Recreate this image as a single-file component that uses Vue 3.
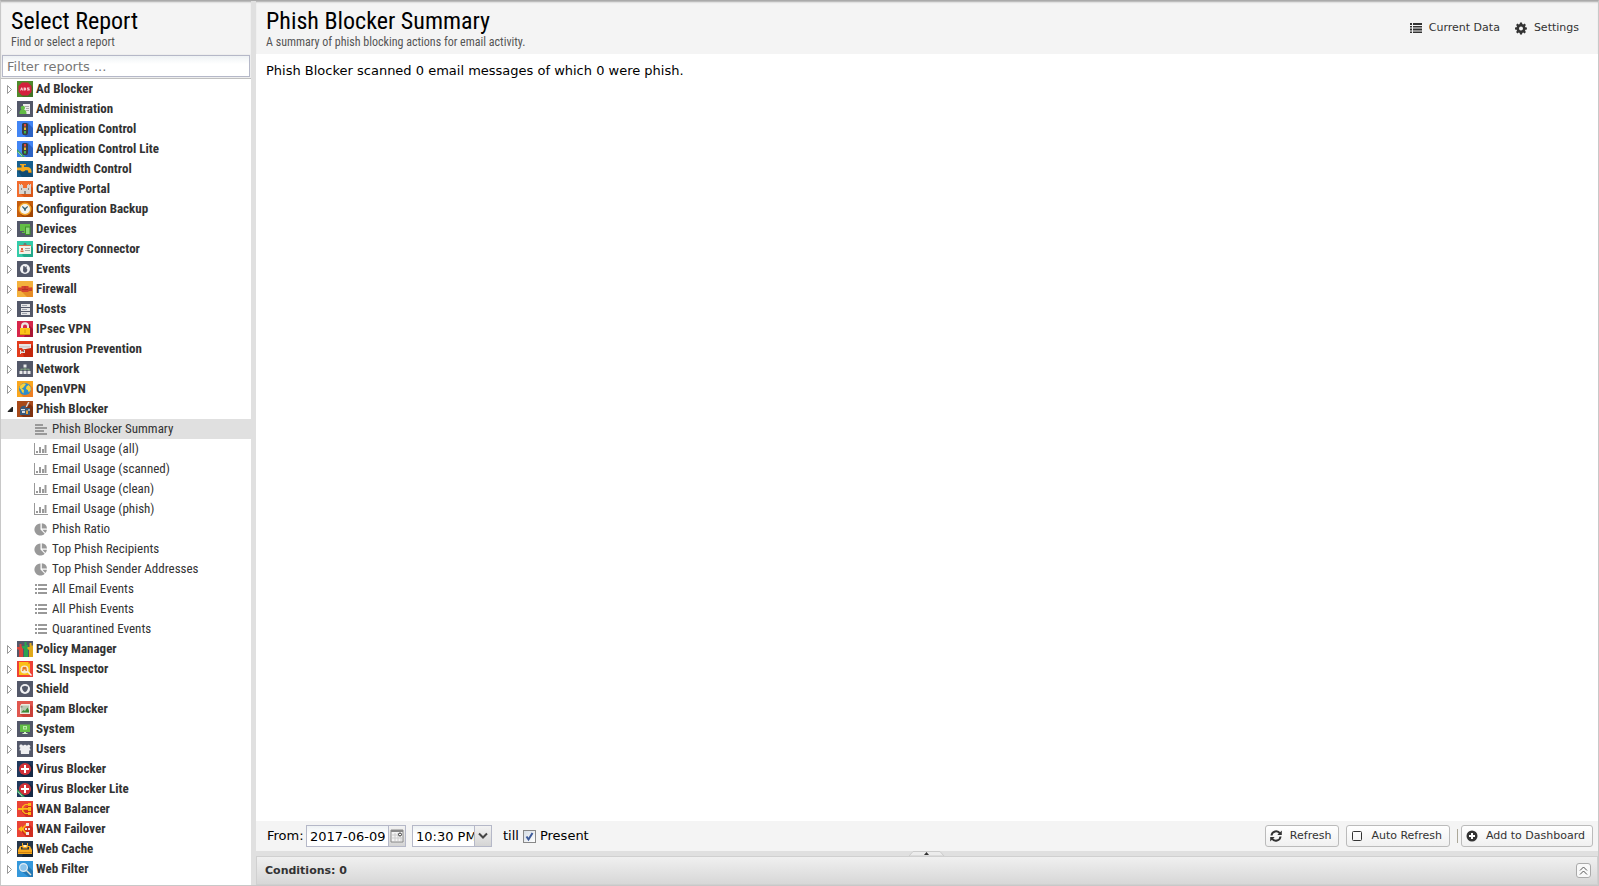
<script setup>
import { ref, computed } from "vue";

const slate = '#535869'
const long = 'M16 6V16H6L3 13L13 3z'

// every icon is a 16x16 tile: background plus [fill, path] layers
const apps = [
  { name: 'Ad Blocker', bg: '#4f8a2c', art: [['#3f7423', long], ['#d3203c', 'M5 1.500h6L14.500 5v6L11 14.500H5L1.500 11V5z'], ['#f4c9cf', 'M3 9.500l1.200-3h1l1 3H5l-.2-.7h-.6L4 9.500zM6.600 6.500h1.600c1.400 0 1.400 3 0 3H6.600zM10 6.500h2.600v1h-1.400l1.500.8c.4.800 0 1.200-.6 1.200H10v-.9h1.400L10 7.800z']] },
  { name: 'Administration', bg: slate, art: [['#ededed', 'M6 3h7v10H6z'], ['#aaa', 'M8 5h4v1H8zM9 7h3v1H9zM9 9h3v1H9z'], ['#63bd45', 'M5 5a2 2 0 0 1 2 3.500c2 .5 2.500 2 2.500 4.500h-7c0-2.500.5-4 2-4.500A2 2 0 0 1 5 5z']] },
  { name: 'Application Control', bg: '#4285f4', art: [['#2b62c4', 'M11 2L16 7V16H9L6 13z'], ['#3a3f45', 'M6 2h4l1 1v9l-1 2H6l-1-2V3z'], ['#e5483a', 'M7 3h2v2.500H7z'], ['#f5b82e', 'M7 6.500h2V9H7z'], ['#3fb54a', 'M7 10h2v2.500H7z']] },
  { name: 'Application Control Lite', bg: '#4285f4', art: [['#2b62c4', 'M11 2L16 7V16H9L6 13z'], ['#3a3f45', 'M6 2h4l1 1v9l-1 2H6l-1-2V3z'], ['#e5483a', 'M7 3h2v2.500H7z'], ['#f5b82e', 'M7 6.500h2V9H7z'], ['#3fb54a', 'M7 10h2v2.500H7z'], ['#35a160', 'M0 8l8 8H5L0 11z'], ['#b8ddc6', 'M1 10.500l4.500 4.500-.6.500L.5 11z']] },
  { name: 'Bandwidth Control', bg: '#17608f', art: [['#114b72', 'M5 6l11 8v2H5L1 10z'], ['#f4a91d', 'M3 3h6v1.300H7V6h3c3 0 4.500 1.500 4.500 5h-3.200c0-1.300-.4-1.700-1.300-1.700H8.500c-1.500 1.700-4 1.700-5 0H0V6.500h4.500V4.300H3z'], ['#c77d0e', 'M11.300 11h3.200v1h-3.200z']] },
  { name: 'Captive Portal', bg: '#f26d2e', art: [['#d95718', 'M4 13l9-9 3 3v9H7z'], ['#d9d5d0', 'M2 3h1v1h1V3h1v1h1v3h4V4h1V3h1v1h1V3h1v10h-5v-3H7v3H2z'], ['#8c8781', 'M4 7h1v2H4zM11 7h1v2h-1zM7 10h2v3H7z']] },
  { name: 'Configuration Backup', bg: '#c65d0c', art: [['#a04503', long], ['#f3a52b', 'M8 1.500a6.500 6.500 0 1 1 0 13a6.500 6.500 0 1 1 0-13z'], ['#f4f4ef', 'M8 3a5 5 0 1 1 0 10A5 5 0 1 1 8 3z'], ['#356275', 'M5.500 5L8 7l2.500-2 .5 1-2 2-.5 2h-1L7 8.200 5 6z']] },
  { name: 'Devices', bg: slate, art: [['#62bd45', 'M3 3h10v7H9v1h1v1H5v-1h2v-1H3z'], ['#3e8e2b', 'M8 5.500h5.500V14H8z'], ['#8dd77a', 'M9 6.500h3.500V13H9z']] },
  { name: 'Directory Connector', bg: '#34cba9', art: [['#22a88a', 'M5 14l9-9 2 2v9H7z'], ['#f3f1e8', 'M2 4h12v9H2z'], ['#6e7774', 'M6 5l1-3h2l1 3z'], ['#e2643d', 'M4 7h2v2H4zM3.500 9.500h3V11h-3z'], ['#a9aaa5', 'M8 7h5v1H8zM8 9h5v1H8z'], ['#d8754d', 'M2 4h12v1H2z']] },
  { name: 'Events', bg: slate, art: [['#f1f1f3', 'M8 3a5 5 0 1 1 0 10A5 5 0 1 1 8 3z'], [slate, 'M6.300 5h1.200l.5 1.500L9.200 5.200l.6.600-.3 1.700.7.500v2l-1.200 1.500H7L6 10z']] },
  { name: 'Firewall', bg: '#f3b13d', art: [['#e68c25', 'M5 11l10-5 1 1v9H10z'], ['#d5432f', 'M1 6.500h3.500V5h7v1.500H15v3h-3.500V11h-7V9.500H1z'], ['#a62f22', 'M5 8h6v.7H5zM7.700 5h.6v3h-.6zM1 9h3.500v.5H1zM11.500 9H15v.5h-3.500z']] },
  { name: 'Hosts', bg: slate, art: [['#e6e6e8', 'M4 3h9v3H4zM4 7h9v3H4zM4 11h9v3H4z'], ['#9fa3ad', 'M5 4h5v1H5zM5 8h5v1H5zM5 12h5v1H5z']] },
  { name: 'IPsec VPN', bg: '#d7264a', art: [['#a81634', 'M12 4l4 4v8H7z'], ['#ece6e0', 'M4 7V5a4 3.800 0 0 1 8 0v2h-2V5.500a2 2 0 0 0-4 0V7z'], ['#fcc419', 'M3 7h10v7H3z'], ['#d69207', 'M7.500 8.500h1v3.500h-1zM3 13h10v1H3z']] },
  { name: 'Intrusion Prevention', bg: '#e23b1c', art: [['#c2260c', 'M5 9l10-5 1 1v11H7z'], ['#e8e6e3', 'M2 3h12v4l-8 1.500L5 7H2z'], ['#b7b2ae', 'M2 5.500h11v.8H2z'], ['#e8e6e3', 'M3 9h1v1.500h2.500V9H8v3H4v1H3z'], ['#5a5350', 'M6 9.500h1.200v1.200H6z']] },
  { name: 'Network', bg: slate, art: [['#e8e8ea', 'M6.500 3.500h3v3h-3zM2.500 10h3v3h-3zM6.500 10h3v3h-3zM10.500 10h3v3h-3z'], ['#8fb587', 'M7.600 6.500h.8v1.300h4V10h-.8V8.600H8.400V10h-.8V8.600H4.400V10h-.8V7.800h4z']] },
  { name: 'OpenVPN', bg: '#f9a71f', art: [['#ee8023', 'M12 3l4 4v9H6L3 12z'], ['#2d8ccb', 'M8 2a6 6 0 1 1 0 12A6 6 0 1 1 8 2z'], ['#f7d23e', 'M3.500 4L7 2.200 9 3 7.500 5 6 7 4.500 7.500 7 9l-.5 3.500L5 11 4 8.500 2.500 7zM9.500 5.500l2-1.500L13.500 6l.3 3-2 2.500-1-2.500L9 8z']] },
  { name: 'Phish Blocker', bg: '#a84a1a', open: true, art: [['#7e3110', long], ['#d9dadd', 'M11 1h1.500L10 6H8.500z'], ['#36597d', 'M3 8c1-3 3-4 6-3L8 7h5v7H3z'], ['#d7dde2', 'M4 8h4v1.200H4zM5 10h3v2H5z'], ['#e9a33a', 'M9 9.500h2V13H9z'], ['#efefef', 'M11.500 8h1v2h-1z']],
    reports: [
      { name: 'Phish Blocker Summary', icon: 'text' },
      { name: 'Email Usage (all)', icon: 'chart' },
      { name: 'Email Usage (scanned)', icon: 'chart' },
      { name: 'Email Usage (clean)', icon: 'chart' },
      { name: 'Email Usage (phish)', icon: 'chart' },
      { name: 'Phish Ratio', icon: 'pie' },
      { name: 'Top Phish Recipients', icon: 'pie' },
      { name: 'Top Phish Sender Addresses', icon: 'pie' },
      { name: 'All Email Events', icon: 'list' },
      { name: 'All Phish Events', icon: 'list' },
      { name: 'Quarantined Events', icon: 'list' }
    ] },
  { name: 'Policy Manager', bg: slate, art: [['#d9453a', 'M2.500 3h2v2.500H6V16H2V9L0 8V6h2.500z'], ['#2aa451', 'M7.500 1h2v3H11v12H7V8L5 7V5h2.500z'], ['#e0a91b', 'M12.500 2h2v2.500H16V16h-4V9l-1.500-1V6h2z']] },
  { name: 'SSL Inspector', bg: '#ee4136', art: [['#fcbf17', 'M2 1h9l2 2v11H2z'], ['#e6a00c', 'M11 1l2 2h-2z'], ['#f6ead2', 'M7.500 4.500a4 4 0 1 1 0 8a4 4 0 1 1 0-8z'], ['#e8761c', 'M5.500 8a1.500 1.500 0 0 1 2-2 1.500 1.500 0 0 1 2 2l.5 2H8.500V8.500h-2V10H5z'], ['#f3f3f3', 'M10 11l1.200-1L15 14l-1 1z']] },
  { name: 'Shield', bg: slate, art: [['#f1f1f3', 'M8 3a5 5 0 1 1 0 10A5 5 0 1 1 8 3z'], [slate, 'M8 4.800l3 .9c0 2.500-.6 4.200-3 5.500-2.400-1.300-3-3-3-5.500z']] },
  { name: 'Spam Blocker', bg: '#e0574f', art: [['#c94038', 'M3 13L14 4l2 2v10H6z'], ['#eeeae0', 'M3 3h10v10H3z'], ['#b9c7b3', 'M4 4.500h8v7H4z'], ['#3b8a36', 'M4 11.500L6.500 9l1.500 1 2.500-3.500 1.500 3v2z'], ['#e0574f', 'M2 2h3L3 5z'], ['#5a5951', 'M3.500 5.500h2v.8h-2z']] },
  { name: 'System', bg: slate, art: [['#62bd45', 'M3 3.500h10v7.500H3z'], ['#b9ebaa', 'M6 5h4v3.500H6z'], ['#62bd45', 'M7.200 6h1.600v1.600H7.200z'], ['#d9f2d2', 'M7 11h2v1h1.500v1h-5v-1H7z']] },
  { name: 'Users', bg: slate, art: [['#efeff1', 'M4.500 3.500A1.700 1.700 0 0 1 6 5a2.200 2.200 0 0 1 4 0 1.700 1.700 0 1 1 2.200 2c1 .3 1.300 1 1.300 2.500H12c.3.800.3 1.700 0 3.500H4c-.3-1.800-.3-2.700 0-3.500H2.500c0-1.500.3-2.200 1.300-2.500a1.700 1.700 0 0 1 .7-3.500z']] },
  { name: 'Virus Blocker', bg: '#20395c', art: [['#152844', long], ['#d23138', 'M8 2a6 6 0 1 1 0 12A6 6 0 1 1 8 2z'], ['#fff', 'M7 4h2v3h3v2H9v3H7V9H4V7h3z']] },
  { name: 'Virus Blocker Lite', bg: '#20395c', art: [['#152844', long], ['#d23138', 'M8 2a6 6 0 1 1 0 12A6 6 0 1 1 8 2z'], ['#fff', 'M7 4h2v3h3v2H9v3H7V9H4V7h3z'], ['#35a160', 'M0 8l8 8H5L0 11z'], ['#b8ddc6', 'M1 10.500l4.500 4.500-.6.500L.5 11z']] },
  { name: 'WAN Balancer', bg: '#ea4335', art: [['#cf2d20', 'M4 10l9-6 3 3v9H9z'], ['#fbb917', 'M1 7h4V5.500L8 3h3V2h3v3h-3V4H8.500L6.500 6v1H11V6h3v4h-3V8.800H6.500V10l2 2H11v-1h3v3h-3v-1H8L5 10.500V9H1z']] },
  { name: 'WAN Failover', bg: '#ea4335', art: [['#cf2d20', 'M4 10l9-6 3 3v9H9z'], ['#fbb917', 'M1 8l4-3v2L9 3l1 1-3 3v2l3 3-1 1-4-4v2z'], ['#f4e8e4', 'M9 2h3v3H9zM8 7h2v2H8zM11 7h2v2h-2zM9 11h3v3H9z']] },
  { name: 'Web Cache', bg: '#26374a', art: [['#17222f', 'M9 3l7 7v6H5z'], ['#f8a91c', 'M3 5h2V2h1v2h4V2h1v3h2l2 4v4H1V9z'], ['#26374a', 'M4 6h1.500v1.500h5V6H12v2.500H4z'], ['#fff0c9', 'M6.500 4h3v2h-3z'], ['#c8780a', 'M1 11h14v.8H1z']] },
  { name: 'Web Filter', bg: '#3598db', art: [['#2579b5', 'M10 4l6 6v6h-4L4 10z'], ['#e4eef5', 'M6.500 2a4.500 4.500 0 1 1 0 9a4.500 4.500 0 1 1 0-9z'], ['#8dc4ea', 'M6.500 3.200a3.300 3.300 0 1 1 0 6.600a3.300 3.300 0 1 1 0-6.600z'], ['#e9e4d6', 'M9 10l1-1 4.500 4.500-1 1z']] }
]

const glyphs = {
  text: 'M1 2h8v2H1zM1 5h12v2H1zM1 8h9v2H1zM1 11h12v2H1z',
  chart: 'M0 1h1v11h13v1H0zM2 9h2v2H2zM5 5h2v6H5zM8 7h2v4H8zM10.500 3h2v8h-2z',
  pie: 'M6.500 1.500v6l4.200 4.200A6 6 0 1 1 6.500 1.500zM7.800 1.300A5.700 5.700 0 0 1 13 6.500H7.800zM8.300 7.800H13A6 6 0 0 1 11.300 11z',
  list: 'M1 2h2v2H1zM4 2h9v2H4zM1 6h2v2H1zM4 6h9v2H4zM1 10h2v2H1zM4 10h9v2H4z'
}

const filter = ref('')
const selected = ref('Phish Blocker Summary')
const opened = ref(apps.filter(a => a.open).map(a => a.name))
const fromDate = ref('2017-06-09')
const fromTime = ref('10:30 PM')
const present = ref(true)
const autoRefresh = ref(false)

const visibleApps = computed(() => {
  const q = filter.value.toLowerCase()
  return apps.filter(a => a.name.toLowerCase().includes(q) || (a.reports || []).some(r => r.name.toLowerCase().includes(q)))
})

function toggle(name) {
  opened.value = opened.value.includes(name) ? opened.value.filter(n => n !== name) : [...opened.value, name]
}
</script>

<template>
  <div class="reports">
    <aside class="sidebar">
      <header class="head">
        <div class="titles">
          <h1>Select Report</h1>
          <p>Find or select a report</p>
        </div>
      </header>
      <div class="filter">
        <input v-model="filter" type="text" placeholder="Filter reports ..." aria-label="Filter reports">
      </div>
      <ul class="tree">
        <li v-for="app in visibleApps" :key="app.name">
          <button class="app" :aria-expanded="opened.includes(app.name)" @click="toggle(app.name)">
            <svg class="arrow" viewBox="0 0 8 10">
              <path v-if="opened.includes(app.name)" d="M6.500 3v4.500H2z" fill="#222" stroke="#222" />
              <path v-else d="M1.500 1.500v8l4-4z" fill="#fff" stroke="#999" />
            </svg>
            <svg class="tile" viewBox="0 0 16 16">
              <path d="M0 0h16v16H0z" :fill="app.bg" />
              <path v-for="(layer, i) in app.art" :key="i" :fill="layer[0]" :d="layer[1]" />
            </svg>
            {{ app.name }}
          </button>
          <ul v-if="app.reports && opened.includes(app.name)">
            <li v-for="r in app.reports" :key="r.name">
              <a href="#" class="report" :class="{ active: r.name === selected }" @click.prevent="selected = r.name">
                <svg class="glyph" viewBox="0 0 14 14"><path :d="glyphs[r.icon]" /></svg>
                {{ r.name }}
              </a>
            </li>
          </ul>
        </li>
      </ul>
    </aside>

    <main class="main">
      <header class="head">
        <div class="titles">
          <h1>{{ selected }}</h1>
          <p>A summary of phish blocking actions for email activity.</p>
        </div>
        <button class="link">
          <svg viewBox="0 0 14 14"><path d="M1 2h2v2H1zM4 2h9v2H4zM1 5h2v1.500H1zM4 5h9v1.500H4zM1 7.500h2v2H1zM4 7.500h9v2H4zM1 10.500h2V12H1zM4 10.500h9V12H4z" /></svg>
          Current Data
        </button>
        <button class="link">
          <svg viewBox="0 0 14 14"><path fill-rule="evenodd" d="M6 1.500h2l.3 1.600 1 .4 1.300-.9 1.300 1.300-.9 1.300.4 1 1.500.3v2l-1.500.3-.4 1 .9 1.300-1.300 1.300-1.300-.9-1 .4L8 13.500H6l-.3-1.600-1-.4-1.300.9-1.300-1.300.9-1.300-.4-1L1 8.500v-2l1.600-.3.4-1-.9-1.300 1.300-1.300 1.300.9 1-.4zM7 5.500a2 2 0 1 0 0 4a2 2 0 1 0 0-4z" /></svg>
          Settings
        </button>
      </header>

      <section class="content">Phish Blocker scanned 0 email messages of which 0 were phish.</section>

      <footer class="toolbar">
        <label class="from" for="from-date">From:</label>
        <span class="field date">
          <input id="from-date" v-model="fromDate" type="text">
          <button class="trigger" aria-label="Pick a date">
            <svg viewBox="0 0 16 20"><path d="M2 4h12v12H2z" fill="#f4f4f4" stroke="#888" /><path d="M2 4h12v2H2z" fill="#888" /><path d="M3 9h7M3 12h10M6 7v8M9 7v8M12 11v4" stroke="#ccc" fill="none" /><circle cx="11" cy="8.500" r="1.500" fill="#fff" stroke="#333" /></svg>
          </button>
        </span>
        <span class="field time">
          <select v-model="fromTime" aria-label="From time">
            <option>10:00 PM</option>
            <option>10:30 PM</option>
            <option>11:00 PM</option>
          </select>
          <span class="trigger">
            <svg viewBox="0 0 16 20"><path d="M4 7.500L8 11.500L12 7.500" fill="none" stroke="#444" stroke-width="2" /></svg>
          </span>
        </span>
        <span class="till">till</span>
        <label class="present">
          <input v-model="present" type="checkbox">
          <svg viewBox="0 0 13 13"><path v-if="present" d="M3.500 6.500L5.500 9.500L9.500 3" /></svg>
          <span>Present</span>
        </label>
        <span class="fill"></span>
        <button class="btn">
          <svg viewBox="0 0 14 14"><path d="M2.500 6.500A4.600 4.600 0 0 1 11 4.500M11.500 7.500A4.600 4.600 0 0 1 3 9.500" fill="none" stroke="#333" stroke-width="2" /><path d="M12.800 1.500V6H8.300zM1.200 12.500V8h4.500z" /></svg>
          <span>Refresh</span>
        </button>
        <button class="btn" :aria-pressed="autoRefresh" @click="autoRefresh = !autoRefresh">
          <svg viewBox="0 0 14 14"><rect x="2.500" y="2.500" width="9" height="9" rx="1" fill="none" stroke="#333" /><path v-if="autoRefresh" d="M4 6h6v2H4z" /></svg>
          <span>Auto Refresh</span>
        </button>
        <span class="sep"></span>
        <button class="btn">
          <svg viewBox="0 0 14 14"><circle cx="7" cy="7" r="5.500" /><path d="M6 4h2v2h2v2H8v2H6V8H4V6h2z" fill="#fff" /></svg>
          <span>Add to Dashboard</span>
        </button>
      </footer>

      <div class="splitter">
        <svg viewBox="0 0 36 5"><path d="M0 5L4 .5H31L35 5z" fill="#ececec" stroke="#ccc" /><path d="M15 4L17.500 1L20 4z" fill="#333" /></svg>
      </div>

      <div class="conditions">
        <h2>Conditions: 0</h2>
        <button aria-label="Expand conditions">
          <svg viewBox="0 0 13 13"><path d="M3 6.500L6.500 3L10 6.500M3 10.500L6.500 7L10 10.500" /></svg>
        </button>
      </div>
    </main>
  </div>
</template>

<style>
body {
  margin: 0;
}
</style>

<style scoped>
* {
  box-sizing: border-box;
}

.reports {
  display: flex;
  min-height: 100vh;
  border: 1px solid #c8c8c8;
  border-top-color: #aaa;
  background-color: #e0e0e0;
  font-family: "DejaVu Sans", sans-serif;
  font-size: 13px;
  color: #000;
}

ul {
  margin: 0;
  padding: 0;
  list-style: none;
}

button {
  font-family: inherit;
  cursor: pointer;
}

.sidebar {
  width: 250px;
  flex: none;
  background-color: #fff;
}

.head {
  display: flex;
  height: 53px;
  padding: 0 11px 0 10px;
  background-color: #f4f4f4;
  box-shadow: inset 0 2px 2px -1px #aaa;
}

.titles {
  flex: 1;
  padding-top: 5px;
}

h1 {
  margin: 0;
  font: 400 24px/30px "Roboto Condensed", "Liberation Sans Narrow", Roboto, sans-serif;
}

.head p {
  margin: 0;
  font: 12px/12px "Roboto Condensed", "Liberation Sans Narrow", Roboto, sans-serif;
  color: #555;
}

.filter {
  padding: 1px;
  background-color: #eee;
  border-bottom: 1px solid #c0c0c0;
}

.filter input {
  display: block;
  width: 100%;
  height: 22px;
  padding: 0 4px;
  border: 1px solid #b5b8c8;
  background: linear-gradient(#eef2f4, #fff 8px);
  font: 13px "DejaVu Sans", sans-serif;
}

.filter input::placeholder {
  color: #777;
}

.app,
.report {
  display: flex;
  align-items: center;
  width: 100%;
  height: 20px;
  padding: 0 0 0 5px;
  border: 0;
  background: none;
  font: 700 13px/20px "Roboto Condensed", "Liberation Sans Narrow", Roboto, sans-serif;
  color: #333;
  text-align: left;
  text-decoration: none;
  white-space: nowrap;
}

.report {
  padding-left: 33px;
  font-weight: 400;
}

.report.active {
  background-color: #e0e0e0;
}

.arrow {
  width: 8px;
  height: 10px;
  margin-right: 3px;
}

.tile {
  width: 16px;
  height: 16px;
  margin-right: 3px;
}

.glyph {
  width: 14px;
  height: 14px;
  margin-right: 4px;
  fill: #999;
}

.main {
  flex: 1;
  min-width: 0;
  display: flex;
  flex-direction: column;
  margin-left: 5px;
}

.link {
  display: flex;
  align-items: center;
  gap: 6px;
  padding: 0 8px;
  border: 0;
  background: none;
  font-size: 11px;
  color: #333;
}

.link + .link {
  padding-left: 6px;
}

.link svg,
.btn svg {
  width: 14px;
  height: 14px;
  fill: #333;
}

.content {
  flex: 1;
  padding: 9px 10px;
  background-color: #fff;
  line-height: 15px;
}

.toolbar {
  display: flex;
  align-items: center;
  height: 30px;
  padding: 0 5px 0 11px;
  background-color: #f4f4f4;
}

.from,
.till,
.present span,
.btn span {
  padding-bottom: 2px;
}

.from {
  width: 39px;
}

.field {
  position: relative;
  display: flex;
  width: 100px;
  height: 22px;
  margin-right: 6px;
  border: 1px solid #b5b8c8;
  background: linear-gradient(#eef2f4, #fff 8px);
}

.time {
  width: 80px;
}

.field input,
.field select {
  flex: 1;
  min-width: 0;
  padding: 0 3px;
  border: 0;
  background: none;
  appearance: none;
  font: 13px "DejaVu Sans", sans-serif;
  color: #000;
}

.trigger {
  width: 17px;
  padding: 0;
  border: 0;
  border-left: 1px solid #b5b8c8;
  background: linear-gradient(#f2f2f2, #d4d4d4);
}

.time .trigger {
  position: absolute;
  top: 0;
  right: 0;
  height: 20px;
  pointer-events: none;
}

.trigger svg {
  display: block;
  width: 16px;
  height: 20px;
}

.till {
  margin: 0 4px 0 5px;
}

.present {
  position: relative;
  display: flex;
  align-items: center;
}

.present input {
  width: 13px;
  height: 13px;
  margin: 0 4px 0 0;
  border: 1px solid #888;
  background: linear-gradient(135deg, #d5dde5, #fff);
  appearance: none;
}

.present svg {
  position: absolute;
  left: 0;
  width: 13px;
  height: 13px;
  fill: none;
  stroke: #3c5a9a;
  stroke-width: 2;
  pointer-events: none;
}

.fill {
  flex: 1;
}

.btn {
  display: flex;
  align-items: center;
  gap: 7px;
  height: 22px;
  margin-left: 7px;
  padding: 0 7px 0 3px;
  border: 1px solid #bbb;
  border-radius: 3px;
  background: linear-gradient(#fff, #f0f0f0);
  font-size: 11px;
  color: #333;
}

.sep {
  width: 1px;
  height: 14px;
  margin-left: 7px;
  background-color: #aca899;
}

.sep + .btn {
  margin-left: 3px;
}

.splitter {
  display: flex;
  justify-content: center;
  height: 5px;
}

.splitter svg {
  width: 36px;
  height: 5px;
}

.conditions {
  display: flex;
  align-items: center;
  justify-content: space-between;
  height: 29px;
  padding: 0 6px 0 8px;
  border: 1px solid #d0d0d0;
  background: linear-gradient(#f0f0f0, #d7d7d7);
}

.conditions h2 {
  margin: 0;
  font-size: 11px;
  color: #333;
}

.conditions button {
  width: 15px;
  height: 15px;
  padding: 0;
  border: 1px solid #aaa;
  border-radius: 3px;
  background-color: #f8f8f8;
}

.conditions svg {
  display: block;
  width: 13px;
  height: 13px;
  fill: none;
  stroke: #555;
}
</style>
